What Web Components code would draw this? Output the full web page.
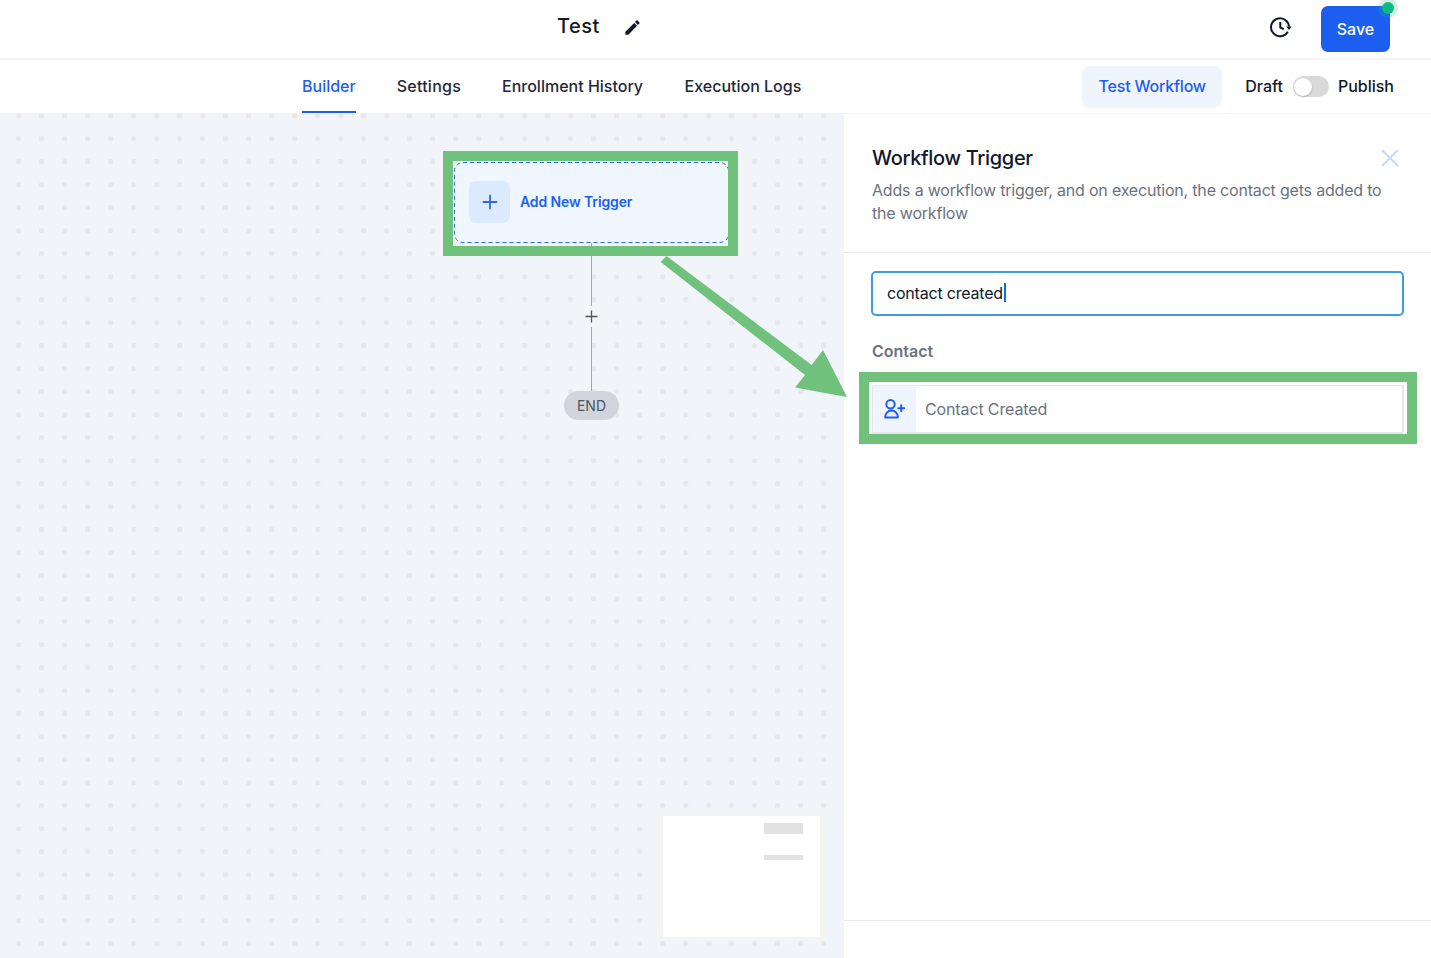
<!DOCTYPE html>
<html>
<head>
<meta charset="utf-8">
<title>Workflow builder</title>
<style>
    html, body { margin: 0; padding: 0; }
    body {
        width: 1431px;
        height: 958px;
        overflow: hidden;
        position: relative;
        background: #ffffff;
        font-family: Inter, "Liberation Sans", sans-serif;
    }
    .workspace { display: flex; height: 844px; }
</style>
</head>
<body>
<wf-topbar title-text="Test"></wf-topbar>
<wf-tabs></wf-tabs>
<div class="workspace">
    <wf-canvas>
        <wf-trigger-node label="Add New Trigger"></wf-trigger-node>
        <wf-minimap></wf-minimap>
    </wf-canvas>
    <wf-panel heading="Workflow Trigger" text="Adds a workflow trigger, and on execution, the contact gets added to the workflow">
        <wf-search value="contact created"></wf-search>
        <wf-group label="Contact">
            <wf-trigger-item label="Contact Created"></wf-trigger-item>
        </wf-group>
    </wf-panel>
</div>
<wf-highlight style="left:443px;top:151px;width:295px;height:105px"></wf-highlight>
<wf-highlight style="left:859px;top:372px;width:558px;height:72px"></wf-highlight>
<wf-arrow></wf-arrow>

<script>
class WfTopbar extends HTMLElement {
    connectedCallback() {
        this.attachShadow({ mode: 'open' });
        this.shadowRoot.innerHTML = `
            <style>
                :host {
                    display: flex;
                    align-items: center;
                    box-sizing: border-box;
                    height: 60px;
                    padding: 0 41px 2px 557px;
                    border-bottom: 2px solid #f3f4f6;
                    background: #ffffff;
                }
                .title { font-size: 20px; font-weight: 500; letter-spacing: 0.5px; color: #111827; margin-top: -4px; line-height: 28px; }
                .edit { width: 19px; height: 19px; margin: -1px 0 0 23px; display: block; }
                .spacer { flex: 1; }
                .history { width: 24px; height: 24px; display: block; margin: -2px 29px 0 0; }
                .save {
                    position: relative;
                    width: 69px;
                    height: 46px;
                    display: flex;
                    align-items: center;
                    justify-content: center;
                    margin-top: 2px;
                    background: #1c5ff0;
                    color: #ffffff;
                    border-radius: 7px;
                    font-size: 16px;
                    font-weight: 500;
                }
                .dot {
                    position: absolute;
                    right: -3.5px;
                    top: -4px;
                    width: 12px;
                    height: 12px;
                    border-radius: 50%;
                    background: #10b981;
                    box-shadow: 0 0 0 4px rgba(16, 185, 129, 0.2);
                }
            </style>
            <div class="title">${this.getAttribute('title-text')}</div>
            <svg class="edit" viewBox="0 0 24 24" fill="#111827"><path d="M3 17.25V21h3.75L17.81 9.94l-3.75-3.75L3 17.25zM20.71 7.04a.996.996 0 000-1.41l-2.34-2.34a.996.996 0 00-1.41 0l-1.83 1.83 3.75 3.75 1.83-1.83z"/></svg>
            <div class="spacer"></div>
            <svg class="history" viewBox="0 0 24 24" fill="none" stroke="#111827" stroke-width="2">
                <path d="M19.8 16.8A9 9 0 1 1 21 11.5"/>
                <path d="M12.3 7V12.5L15.7 14.2" stroke-linejoin="round"/>
                <path d="M18.2 11.5h5.5L21 15z" fill="#111827" stroke="none"/>
            </svg>
            <div class="save">Save<span class="dot"></span></div>
        `;
    }
}

class WfTabs extends HTMLElement {
    connectedCallback() {
        this.attachShadow({ mode: 'open' });
        this.shadowRoot.innerHTML = `
            <style>
                :host {
                    display: flex;
                    align-items: stretch;
                    box-sizing: border-box;
                    height: 54px;
                    padding: 0 37px 0 302px;
                    border-bottom: 1px solid #f1f2f4;
                    font-size: 16px;
                    font-weight: 500;
                    color: #1f2937;
                }
                .tabs { display: flex; gap: 41px; }
                .tab { display: flex; align-items: center; box-sizing: border-box; border-bottom: 2px solid transparent; }
                .tab.active { color: #1c5ff0; border-bottom-color: #1c5ff0; }
                .tab.wide { letter-spacing: 0.25px; }
                .spacer { flex: 1; }
                .actions { display: flex; align-items: center; color: #111827; }
                .actions span { padding-bottom: 2px; }
                .test {
                    box-sizing: border-box;
                    width: 140px;
                    height: 42px;
                    display: flex;
                    align-items: center;
                    justify-content: center;
                    padding-bottom: 2px;
                    background: #eff4ff;
                    color: #1c5ff0;
                    border-radius: 8px;
                    margin: 1px 23px 0 0;
                    letter-spacing: -0.2px;
                }
                .toggle {
                    position: relative;
                    width: 36px;
                    height: 21px;
                    margin: 0 9px 0 10px;
                    border-radius: 11px;
                    background: #d9d9d9;
                }
                .toggle::after {
                    content: "";
                    position: absolute;
                    left: 1px;
                    top: 1.5px;
                    width: 18px;
                    height: 18px;
                    border-radius: 50%;
                    background: #ffffff;
                    box-shadow: 0 1px 2px rgba(0, 0, 0, 0.2);
                }
            </style>
            <div class="tabs">
                <div class="tab active">Builder</div>
                <div class="tab wide">Settings</div>
                <div class="tab">Enrollment History</div>
                <div class="tab" style="margin-left:0.5px">Execution Logs</div>
            </div>
            <div class="spacer"></div>
            <div class="actions">
                <div class="test">Test Workflow</div>
                <span>Draft</span>
                <div class="toggle"></div>
                <span>Publish</span>
            </div>
        `;
    }
}

class WfCanvas extends HTMLElement {
    connectedCallback() {
        this.attachShadow({ mode: 'open' });
        this.shadowRoot.innerHTML = `
            <style>
                :host {
                    display: block;
                    position: relative;
                    flex: 0 0 844px;
                    height: 844px;
                    overflow: hidden;
                    background-color: #f1f4f8;
                    background-image: radial-gradient(circle at center, #e6e7e9 0, #e6e7e9 2.3px, transparent 3px);
                    background-size: 23px 23px;
                    background-position: 7.2px -9.8px;
                }
                .line { position: absolute; left: 591px; width: 1px; background: #a3a6ad; }
                .plus {
                    position: absolute;
                    left: 581px;
                    top: 192px;
                    width: 21px;
                    height: 21px;
                    border-radius: 50%;
                    background: #f3f4f6;
                }
                .plus svg { display: block; width: 21px; height: 21px; }
                .end {
                    position: absolute;
                    left: 564px;
                    top: 277px;
                    width: 55px;
                    height: 29px;
                    display: flex;
                    align-items: center;
                    justify-content: center;
                    border-radius: 15px;
                    background: #d1d5db;
                    color: #4b5563;
                    font-size: 14px;
                }
            </style>
            <div class="line" style="top:129px;height:63px"></div>
            <div class="line" style="top:213px;height:64px"></div>
            <div class="plus"><svg viewBox="0 0 21 21" stroke="#4b5563" stroke-width="1.3"><path d="M10.5 4.5v12M4.5 10.5h12"/></svg></div>
            <div class="end">END</div>
            <slot></slot>
        `;
    }
}

class WfTriggerNode extends HTMLElement {
    connectedCallback() {
        this.attachShadow({ mode: 'open' });
        this.shadowRoot.innerHTML = `
            <style>
                :host {
                    position: absolute;
                    left: 454px;
                    top: 48px;
                    width: 275px;
                    height: 81px;
                    box-sizing: border-box;
                    display: flex;
                    align-items: center;
                    gap: 10px;
                    padding: 0 0 2px 15px;
                    border-radius: 9px;
                    background: #eff6ff;
                }
                .outline { position: absolute; left: 0; top: 0; display: block; }
                .tile {
                    width: 41px;
                    height: 42px;
                    border-radius: 7px;
                    background: #dbeafe;
                    display: flex;
                    align-items: center;
                    justify-content: center;
                }
                .tile svg { width: 16px; height: 16px; display: block; }
                .label { font-size: 14px; font-weight: 600; letter-spacing: -0.12px; color: #1c5ff0; }
            </style>
            <svg class="outline" width="275" height="81" fill="none" stroke="#2f6cf0" stroke-width="1" stroke-dasharray="4 3">
                <rect x="0.5" y="0.5" width="274" height="80" rx="8.5"/>
            </svg>
            <div class="tile"><svg viewBox="0 0 16 16" stroke="#2f66e8" stroke-width="1.8" stroke-linecap="round"><path d="M8 1.5v13M1.5 8h13"/></svg></div>
            <div class="label">${this.getAttribute('label')}</div>
        `;
    }
}

class WfMinimap extends HTMLElement {
    connectedCallback() {
        this.attachShadow({ mode: 'open' });
        this.shadowRoot.innerHTML = `
            <style>
                :host {
                    position: absolute;
                    left: 663px;
                    top: 702px;
                    width: 157px;
                    height: 121px;
                    box-sizing: border-box;
                    background: #ffffff;
                    box-shadow: 0 0 0 3px #f5f4f4, -4px 0 0 3px #f5f4f4, 4px 0 0 3px #f5f4f4;
                    padding: 7px 17px 0 101px;
                    display: flex;
                    flex-direction: column;
                }
                .a { height: 11px; background: #e2e2e2; }
                .b { height: 5px; margin-top: 21px; background: #e2e2e2; }
            </style>
            <div class="a"></div>
            <div class="b"></div>
        `;
    }
}

class WfPanel extends HTMLElement {
    connectedCallback() {
        this.attachShadow({ mode: 'open' });
        this.shadowRoot.innerHTML = `
            <style>
                :host {
                    flex: 1;
                    display: flex;
                    flex-direction: column;
                    height: 844px;
                    box-sizing: border-box;
                    background: #ffffff;
                }
                .head {
                    position: relative;
                    box-sizing: border-box;
                    height: 139px;
                    padding: 30px 28px 0 28px;
                    border-bottom: 1px solid #e5e7eb;
                }
                h2 { margin: 0; font-size: 20px; line-height: 28px; font-weight: 500; letter-spacing: -0.32px; color: #111827; }
                p { margin: 7px 0 0; font-size: 16px; line-height: 23px; letter-spacing: -0.19px; color: #6b7280; }
                .close { position: absolute; right: 32px; top: 35px; width: 18px; height: 18px; display: block; }
                .body { flex: 1; padding: 18px 27px 0 27px; }
                .foot { height: 37px; border-top: 1px solid #e5e7eb; }
            </style>
            <div class="head">
                <h2>${this.getAttribute('heading')}</h2>
                <p>${this.getAttribute('text')}</p>
                <svg class="close" viewBox="0 0 18 18" stroke="#c7d7fe" stroke-width="2"><path d="M1 1l16 16M17 1L1 17"/></svg>
            </div>
            <div class="body"><slot></slot></div>
            <div class="foot"></div>
        `;
    }
}

class WfSearch extends HTMLElement {
    connectedCallback() {
        this.attachShadow({ mode: 'open' });
        this.shadowRoot.innerHTML = `
            <style>
                :host {
                    display: flex;
                    align-items: center;
                    box-sizing: border-box;
                    width: 533px;
                    height: 45px;
                    padding: 0 0 2px 14px;
                    border: 2px solid #3a9ddc;
                    border-radius: 5px;
                    font-size: 16px;
                    letter-spacing: -0.2px;
                    color: #111827;
                }
                .caret { width: 2px; height: 19px; margin-left: 1px; background: #0b6fe8; }
            </style>
            <span>${this.getAttribute('value')}</span><span class="caret"></span>
        `;
    }
}

class WfGroup extends HTMLElement {
    connectedCallback() {
        this.attachShadow({ mode: 'open' });
        this.shadowRoot.innerHTML = `
            <style>
                :host { display: block; margin-top: 25px; }
                .label { font-size: 16px; line-height: 20px; font-weight: 600; color: #6b7280; margin: 0 0 24px 1px; }
            </style>
            <div class="label">${this.getAttribute('label')}</div>
            <slot></slot>
        `;
    }
}

class WfTriggerItem extends HTMLElement {
    connectedCallback() {
        this.attachShadow({ mode: 'open' });
        this.shadowRoot.innerHTML = `
            <style>
                :host {
                    display: flex;
                    align-items: stretch;
                    box-sizing: border-box;
                    width: 532px;
                    height: 49px;
                    margin-left: 1px;
                    border: 1px solid #e5e7eb;
                    border-width: 1px 2px 2px 1px;
                    font-size: 16px;
                    letter-spacing: -0.13px;
                    color: #6b7280;
                }
                .tile {
                    flex: 0 0 43px;
                    background: #eff4ff;
                    display: flex;
                    align-items: center;
                    justify-content: center;
                }
                .tile svg { width: 24px; height: 24px; display: block; margin-left: -2px; }
                .label { display: flex; align-items: center; padding-left: 9px; }
            </style>
            <div class="tile">
                <svg viewBox="0 0 24 24" fill="none" stroke="#1c5ff0" stroke-width="2" stroke-linecap="round" stroke-linejoin="round">
                    <circle cx="8.5" cy="7.2" r="4.2"/>
                    <path d="M3.2 20.6v-.8a6.3 6.3 0 0 1 12.6 0v.8z"/>
                    <path d="M19.2 8.2v6M16.2 11.2h6"/>
                </svg>
            </div>
            <div class="label">${this.getAttribute('label')}</div>
        `;
    }
}

class WfHighlight extends HTMLElement {
    connectedCallback() {
        this.attachShadow({ mode: 'open' });
        this.shadowRoot.innerHTML = `
            <style>
                :host {
                    position: absolute;
                    box-sizing: border-box;
                    border: 10px solid #6fc17b;
                    pointer-events: none;
                }
            </style>
        `;
    }
}

class WfArrow extends HTMLElement {
    connectedCallback() {
        this.attachShadow({ mode: 'open' });
        this.shadowRoot.innerHTML = `
            <style>
                :host { position: absolute; left: 650px; top: 250px; width: 210px; height: 160px; pointer-events: none; }
                svg { display: block; }
            </style>
            <svg width="210" height="160" viewBox="650 250 210 160">
                <polygon fill="#6fc17b" points="660.7,262 666.5,256 811.7,365 823,350 847,397 795,387.5 805,375"/>
            </svg>
        `;
    }
}

customElements.define('wf-topbar', WfTopbar);
customElements.define('wf-tabs', WfTabs);
customElements.define('wf-canvas', WfCanvas);
customElements.define('wf-trigger-node', WfTriggerNode);
customElements.define('wf-minimap', WfMinimap);
customElements.define('wf-panel', WfPanel);
customElements.define('wf-search', WfSearch);
customElements.define('wf-group', WfGroup);
customElements.define('wf-trigger-item', WfTriggerItem);
customElements.define('wf-highlight', WfHighlight);
customElements.define('wf-arrow', WfArrow);
</script>
</body>
</html>
